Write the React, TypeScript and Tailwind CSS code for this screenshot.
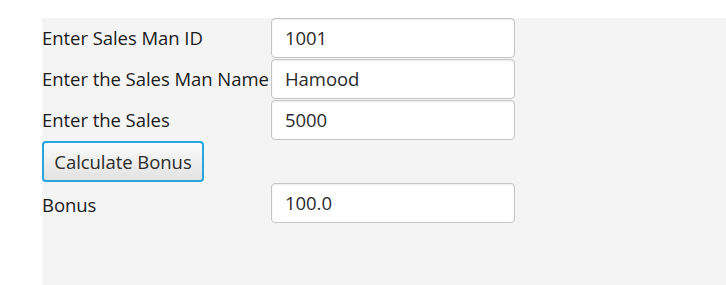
import React from "react";

const rows = [
  { label: "Enter Sales Man ID", value: "1001" },
  { label: "Enter the Sales Man Name", value: "Hamood" },
  { label: "Enter the Sales", value: "5000" },
];

function Field({ value }: { value: string }) {
  return (
    <div className="flex h-[40px] w-[244px] items-center rounded-[4px] border border-[#c4c4c4] bg-white pl-[13px] text-[#2b2b2b] shadow-[inset_0_1px_2px_rgba(0,0,0,0.08)]">
      {value}
    </div>
  );
}

export default function App() {
  return (
    <div className="h-[285px] w-[726px] bg-white pl-[42px] pt-[18px] font-['Open_Sans',sans-serif] text-[18.5px] tracking-[-0.05px]">
      <div className="h-[267px] w-full bg-[#f4f4f4]">
        <div className="grid grid-cols-[229px_244px] gap-y-[1px]">
          {rows.map((r) => (
            <React.Fragment key={r.label}>
              <div className="flex h-[40px] items-center whitespace-nowrap text-[#1b1b1b]">{r.label}</div>
              <Field value={r.value} />
            </React.Fragment>
          ))}
          <div className="flex h-[41px] items-center">
            <button className="h-[41px] w-[162px] rounded-[4px] border-2 border-[#26a6dc] bg-gradient-to-b from-[#fbfbfb] to-[#e2e2e2] text-[#2b2b2b]">
              Calculate Bonus
            </button>
          </div>
          <div />
          <div className="flex h-[40px] items-center pt-[3px] text-[#1b1b1b]">Bonus</div>
          <Field value="100.0" />
        </div>
      </div>
    </div>
  );
}
